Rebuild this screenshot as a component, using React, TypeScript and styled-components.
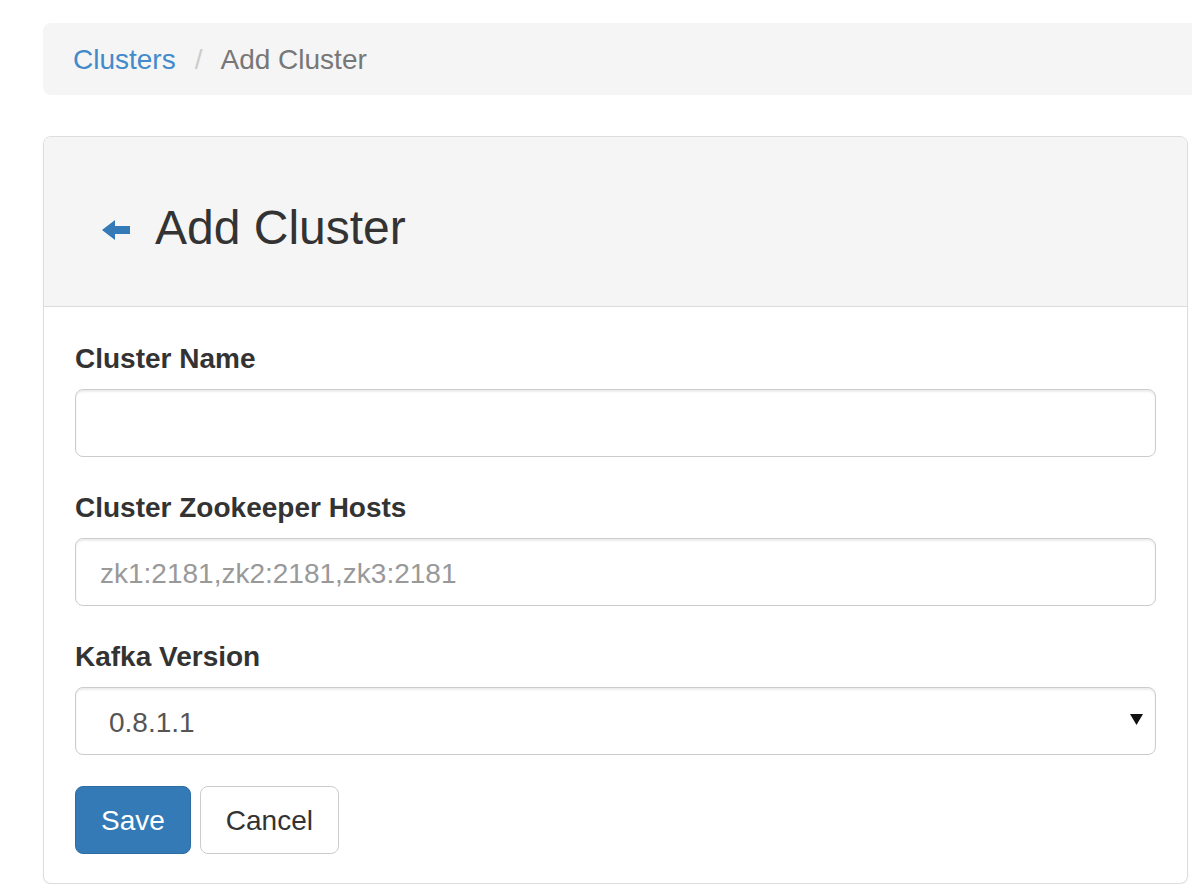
import styled, { createGlobalStyle } from "styled-components";

const GlobalStyle = createGlobalStyle`
  html, body {
    margin: 0;
    padding: 0;
    background: #fff;
    overflow: hidden;
  }
  body {
    font-family: "Liberation Sans", Arial, Helvetica, sans-serif;
    color: #333;
  }
  * {
    box-sizing: border-box;
  }
`;

const Page = styled.div`
  padding: 23px 4px 0 43px;
  width: 1192px;
`;

const Breadcrumb = styled.ol`
  display: flex;
  align-items: center;
  height: 72px;
  margin: 0 -40px 41px 0;
  padding: 2px 30px 0;
  list-style: none;
  background-color: #f5f5f5;
  border-radius: 8px;
  font-size: 28px;
`;

const Crumb = styled.li<{ $active?: boolean }>`
  color: ${(p) => (p.$active ? "#777" : "#428bca")};
`;

const Divider = styled.li`
  color: #ccc;
  padding: 0 18px 0 19px;
`;

const Panel = styled.div`
  background: #fff;
  border: 1px solid #ddd;
  border-radius: 8px;
  box-shadow: 0 1px 2px rgba(0, 0, 0, 0.05);
  overflow: hidden;
`;

const PanelHeading = styled.div`
  display: flex;
  align-items: center;
  height: 170px;
  padding: 14px 30px 0 58px;
  background-color: #f5f5f5;
  border-bottom: 1px solid #ddd;
`;

const BackLink = styled.a`
  display: flex;
  margin: 2px 25px 0 0;
  color: #337ab7;
  cursor: pointer;
`;

const Title = styled.h3`
  margin: 0;
  font-size: 48px;
  font-weight: 400;
  line-height: 1.1;
  color: #333;
`;

const PanelBody = styled.form`
  padding: 32px 31px 29px 31px;
`;

const FormGroup = styled.div`
  margin-bottom: 31px;
`;

const Label = styled.label`
  display: block;
  margin-bottom: 10px;
  font-size: 28px;
  font-weight: 700;
  line-height: 40px;
  color: #333;
`;

const Input = styled.input`
  display: block;
  width: 100%;
  height: 68px;
  padding: 14px 24px 10px;
  font-family: inherit;
  font-size: 28px;
  color: #555;
  background: #fff;
  border: 1px solid #ccc;
  border-radius: 8px;
  box-shadow: inset 0 2px 2px rgba(0, 0, 0, 0.075);
  outline: none;

  &::placeholder {
    color: #999;
  }
`;

const SelectWrap = styled.div`
  position: relative;
`;

const Select = styled.select`
  display: block;
  width: 100%;
  height: 68px;
  padding: 2px 24px 0 33px;
  font-family: inherit;
  font-size: 28px;
  color: #555;
  background: #fff;
  border: 1px solid #ccc;
  border-radius: 8px;
  box-shadow: inset 0 2px 2px rgba(0, 0, 0, 0.075);
  appearance: none;
  outline: none;
`;

const Caret = styled.svg`
  position: absolute;
  right: 13px;
  top: 27px;
  pointer-events: none;
`;

const Actions = styled.div`
  display: flex;
  gap: 9px;
`;

const Button = styled.button<{ $primary?: boolean }>`
  height: 68px;
  padding: 2px 25px 0;
  font-family: inherit;
  font-size: 28px;
  line-height: 40px;
  border-radius: 8px;
  cursor: pointer;
  color: ${(p) => (p.$primary ? "#fff" : "#333")};
  background-color: ${(p) => (p.$primary ? "#337ab7" : "#fff")};
  border: 1px solid ${(p) => (p.$primary ? "#2e6da4" : "#ccc")};
`;

function ArrowLeft() {
  return (
    <svg width="28" height="20" viewBox="0 0 28 20">
      <path d="M0 10 L13 0 L13 6 L28 6 L28 14 L13 14 L13 20 Z" fill="currentColor" />
    </svg>
  );
}

export default function App() {
  return (
    <>
      <GlobalStyle />
      <Page>
        <Breadcrumb>
          <Crumb>Clusters</Crumb>
          <Divider>/</Divider>
          <Crumb $active>Add Cluster</Crumb>
        </Breadcrumb>
        <Panel>
          <PanelHeading>
            <BackLink>
              <ArrowLeft />
            </BackLink>
            <Title>Add Cluster</Title>
          </PanelHeading>
          <PanelBody onSubmit={(e) => e.preventDefault()}>
            <FormGroup>
              <Label htmlFor="name">Cluster Name</Label>
              <Input id="name" type="text" />
            </FormGroup>
            <FormGroup>
              <Label htmlFor="zk">Cluster Zookeeper Hosts</Label>
              <Input id="zk" type="text" placeholder="zk1:2181,zk2:2181,zk3:2181" />
            </FormGroup>
            <FormGroup>
              <Label htmlFor="version">Kafka Version</Label>
              <SelectWrap>
                <Select id="version" defaultValue="0.8.1.1">
                  <option value="0.8.1.1">0.8.1.1</option>
                  <option value="0.8.2-beta">0.8.2-beta</option>
                </Select>
                <Caret width="13" height="11" viewBox="0 0 13 11">
                  <path d="M0 0 L13 0 L6.5 11 Z" fill="#111" />
                </Caret>
              </SelectWrap>
            </FormGroup>
            <Actions>
              <Button type="submit" $primary>
                Save
              </Button>
              <Button type="button">Cancel</Button>
            </Actions>
          </PanelBody>
        </Panel>
      </Page>
    </>
  );
}
